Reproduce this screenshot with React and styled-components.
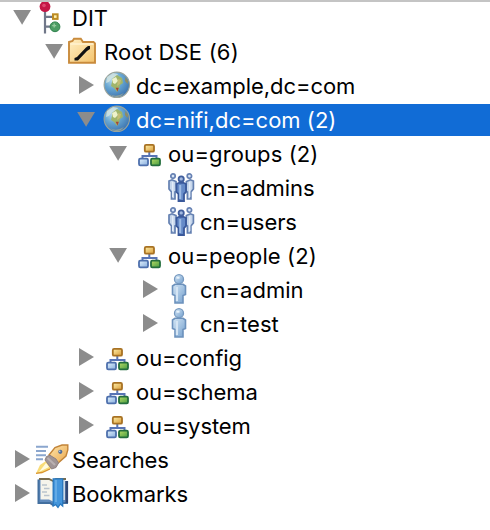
import React from "react";
import styled, { createGlobalStyle } from "styled-components";

const GlobalStyle = createGlobalStyle`
  * { box-sizing: border-box; }
  body { margin: 0; background: #fff; }
`;

const Panel = styled.main`
  width: 490px;
  height: 530px;
  overflow: hidden;
  background: #fff;
  border-top: 2px solid #c4c4c4;
  font-family: Inter, "Liberation Sans", sans-serif;
  font-size: 22px;
`;

const Tree = styled.div`
  display: flex;
  flex-direction: column;
  gap: 2px;
`;

const Row = styled.div`
  display: flex;
  align-items: center;
  height: 32px;
  padding-left: ${(p) => 12 + p.$depth * 32}px;
  background: ${(p) => (p.$selected ? "#116cd6" : "transparent")};
  color: ${(p) => (p.$selected ? "#fff" : "#000")};
`;

const Twisty = styled.span`
  display: flex;
  flex: none;
  width: 24px;
  height: 32px;
`;

const IconBox = styled.span`
  display: flex;
  flex: none;
  width: 32px;
  height: 32px;
  margin-right: 4px;

  svg {
    overflow: visible;
  }
`;

const Label = styled.span`
  line-height: 32px;
  white-space: nowrap;
  letter-spacing: ${(p) => p.$tracking}px;
`;

const Arrow = ({ open }) => (
  <svg width="24" height="32" viewBox="0 0 24 32">
    <path d={open ? "M1.2 8H19L10.1 22.8Z" : "M3 6V24L18 15Z"} fill="#8c8c8c" />
  </svg>
);

const Svg = ({ children }) => (
  <svg width="32" height="32" viewBox="0 0 32 32" fill="none">
    {children}
  </svg>
);

const DitIcon = () => (
  <Svg>
    <path d="M9 6V31.5M9 14.8H16M9 24.6H15" stroke="#707789" strokeWidth="2.2" />
    <circle cx="9" cy="4.6" r="5.4" fill="#c41746" />
    <circle cx="8" cy="3.5" r="1.8" fill="#df4770" />
    <rect x="17" y="12.3" width="4.6" height="4.6" fill="#fff1ad" stroke="#bd8b22" strokeWidth="2" />
    <circle cx="19" cy="24.8" r="4.9" fill="#4b9c64" stroke="#30834e" />
    <path d="M16.2 23.6H20.2M18.2 21.6V25.6" stroke="#92c99c" strokeWidth="1.4" />
  </Svg>
);

const FolderIcon = () => (
  <Svg>
    <path d="M1 26.8V6L4.5 5L6 2.8H12.8L15 6H25.5L27 7.5V26.8Z" fill="url(#folder)" stroke="#c98b3c" strokeWidth="1.9" />
    <path d="M2.5 8H25.5" stroke="#fff2cf" strokeWidth="1.6" />
    <path d="M6.5 24.5V22L9 21L18 11.5L20 10H22V13L19 15L10 24.5Z" fill="#111" />
  </Svg>
);

const GlobeIcon = () => (
  <Svg>
    <circle cx="16.8" cy="14.8" r="12.7" fill="url(#ocean)" stroke="#9ba49b" strokeWidth="1.1" />
    <path d="M7 7L13 3L18 4L16 7L12 8L9 12L6 13Z" fill="#d9e8e2" opacity=".75" />
    <path d="M12 9L17 5L22 8L23 13L20 15L19 19L17 22L14 18L11 16L12 12Z" fill="#9fb56b" />
    <path d="M12 9L16 7L18 11L15 14L13 13Z" fill="#edf2cc" />
    <path d="M18 9L21 10L20 14L17 16Z" fill="#c3bd76" />
    <path d="M25.5 7L28 11L27.5 14L25 11Z" fill="#928d5e" />
    <path d="M15.6 17.7H18.8L17.5 21.5Z" fill="#a84635" />
    <path d="M10 24Q16 28 24 23L21 26Q15 29 10 24Z" fill="#8fa09b" />
  </Svg>
);

const OrgIcon = () => (
  <Svg>
    <path d="M17.3 14V18M10.5 21V18H24.5V21" stroke="#5874b5" strokeWidth="2" />
    <rect x="12.8" y="6.9" width="9.2" height="6.8" rx="1.3" fill="url(#amber)" stroke="#a87223" strokeWidth="1.8" />
    <rect x="7" y="20.6" width="9" height="6.8" rx="1.3" fill="url(#paleBlue)" stroke="#4e70ad" strokeWidth="1.8" />
    <rect x="19" y="20.6" width="9" height="6.8" rx="1.3" fill="url(#leaf)" stroke="#246e3d" strokeWidth="1.8" />
  </Svg>
);

const GroupIcon = () => (
  <Svg>
    {[0, 1].map((side) => (
      <g key={side} transform={side ? "translate(34.4 0) scale(-1 1)" : undefined}>
        <path d="M5 9L8 7.8L12 9.5L12.5 19L11 20V27H7.5V20L5 17Z" fill="#c6d6eb" stroke="#6480b1" strokeWidth="1.7" />
        <path d="M8.7 10V25" stroke="#e4eef9" strokeWidth="1.3" />
        <circle cx="9" cy="4.1" r="2.2" fill="#d8e5f5" stroke="#6681b3" strokeWidth="1.7" />
      </g>
    ))}
    <path d="M12.5 12L15 10.8H19.5L22 12V20L20 22V29H14.5V22L12.5 20Z" fill="#668bc8" stroke="#3a599b" strokeWidth="1.8" />
    <path d="M16.2 13V27" stroke="#9dbbe4" strokeWidth="2" />
    <circle cx="17.2" cy="6.9" r="2.6" fill="#a2b9df" stroke="#405e9d" strokeWidth="1.8" />
  </Svg>
);

const PersonIcon = () => (
  <Svg>
    <path d="M8.5 12L11 10.3H19L21.5 12V20.5L19 21.5V29H11V21.5L8.5 20.5Z" fill="url(#person)" stroke="#6c91bc" strokeWidth="1.6" />
    <path d="M12.9 13V27" stroke="#d5e5f4" strokeWidth="2.2" />
    <circle cx="15" cy="5.2" r="4.5" fill="url(#person)" stroke="#7598bf" strokeWidth="1.3" />
    <path d="M12.5 3.7H15.5" stroke="#e8f3fb" strokeWidth="2" />
  </Svg>
);

const RocketIcon = () => (
  <Svg>
    <path d="M0 2.8H12M0 7H10M0 11.2H10M0 15.2H7" stroke="#8ba6ce" strokeWidth="2" />
    <path d="M10 17L4 21L0 29.5L8 28L16 24Z" fill="#f9dc77" />
    <path d="M10 19L3 28L13 23Z" fill="#fffbe0" />
    <path d="M0 29.3L6 28.5L14 25" stroke="#d99532" strokeWidth="1.3" />
    <path d="M13 11L19 3.5L26 1H31.8V6L30 12L21 20Z" fill="url(#rocket)" stroke="#c28439" strokeWidth="1.4" />
    <path d="M9 16L10.5 12.5L14 11.3L20 15L22.5 19L20 23.5L15.5 25L12 20Z" fill="#9f9495" stroke="#8f8182" />
    <path d="M11.5 14L19 21" stroke="#b9b0b1" strokeWidth="2.2" />
    <circle cx="24.3" cy="7.8" r="2.1" fill="#526e99" />
    <circle cx="23.7" cy="7.2" r=".8" fill="#c5d9ed" />
  </Svg>
);

const BookIcon = () => (
  <Svg>
    <path d="M2.5 1.5V25H14L17 27L20 25H31V3" fill="#608bbd" stroke="#426f9f" strokeWidth="2" />
    <path d="M4.5 1.5H13L17 3V23.5L13 21.5H4.5Z" fill="#f5f4eb" />
    <path d="M17 3L20 1.5H29V22H20L17 24Z" fill="#d0dae5" />
    <path d="M3 1H13L17 3L20 1H30" stroke="#776c4f" strokeWidth="1.8" />
    <path d="M6 7H11M8 10.5H13.5M6 14H11M8 17.5H13.5" stroke="#b9c3cd" strokeWidth="1.4" />
    <path d="M30.8 3V25" stroke="#304774" strokeWidth="2.6" />
    <path d="M17.2 .8H26.7V28L24.3 26L22 29.5L19.7 26.5L17.2 28Z" fill="#4496dc" stroke="#2878bf" strokeWidth="1.3" />
    <path d="M20 2V24" stroke="#67ade5" strokeWidth="1.9" />
  </Svg>
);

const Gradient = ({ id, from, to }) => (
  <linearGradient id={id} x1="0" y1="0" x2="1" y2="1">
    <stop stopColor={from} />
    <stop offset="1" stopColor={to} />
  </linearGradient>
);

const Definitions = styled.svg`
  display: block;
  width: 0;
  height: 0;
`;

const rows = [
  { label: "DIT", depth: 0, open: true, icon: DitIcon },
  { label: "Root DSE (6)", depth: 1, open: true, icon: FolderIcon, tracking: 0.18 },
  { label: "dc=example,dc=com", depth: 2, open: false, icon: GlobeIcon, tracking: -0.05 },
  { label: "dc=nifi,dc=com (2)", depth: 2, open: true, icon: GlobeIcon, selected: true, tracking: 0.02 },
  { label: "ou=groups (2)", depth: 3, open: true, icon: OrgIcon, tracking: 0.1 },
  { label: "cn=admins", depth: 4, icon: GroupIcon, tracking: -0.07 },
  { label: "cn=users", depth: 4, icon: GroupIcon, tracking: -0.07 },
  { label: "ou=people (2)", depth: 3, open: true, icon: OrgIcon, tracking: 0.1 },
  { label: "cn=admin", depth: 4, open: false, icon: PersonIcon },
  { label: "cn=test", depth: 4, open: false, icon: PersonIcon },
  { label: "ou=config", depth: 2, open: false, icon: OrgIcon, tracking: -0.05 },
  { label: "ou=schema", depth: 2, open: false, icon: OrgIcon, tracking: -0.07 },
  { label: "ou=system", depth: 2, open: false, icon: OrgIcon, tracking: -0.07 },
  { label: "Searches", depth: 0, open: false, icon: RocketIcon, tracking: -0.07 },
  { label: "Bookmarks", depth: 0, open: false, icon: BookIcon, tracking: -0.07 },
];

export default function App() {
  return (
    <Panel>
      <GlobalStyle />
      <Definitions aria-hidden="true">
        <defs>
          <Gradient id="folder" from="#fff0c5" to="#f4c36c" />
          <Gradient id="amber" from="#fff0aa" to="#d99b37" />
          <Gradient id="paleBlue" from="#e1f1fc" to="#87addd" />
          <Gradient id="leaf" from="#b9db68" to="#459c3f" />
          <Gradient id="person" from="#d4e6f5" to="#739fcd" />
          <Gradient id="rocket" from="#ffe6ac" to="#e8a64d" />
          <radialGradient id="ocean" cx=".35" cy=".3" r=".7">
            <stop stopColor="#c0deee" />
            <stop offset=".5" stopColor="#68a7d2" />
            <stop offset="1" stopColor="#4179b3" />
          </radialGradient>
        </defs>
      </Definitions>
      <Tree role="tree">
        {rows.map(({ label, depth, open, icon: Icon, selected, tracking = 0 }) => (
          <Row key={label} role="treeitem" $depth={depth} $selected={selected}>
            <Twisty>{open !== undefined && <Arrow open={open} />}</Twisty>
            <IconBox><Icon /></IconBox>
            <Label $tracking={tracking}>{label}</Label>
          </Row>
        ))}
      </Tree>
    </Panel>
  );
}
